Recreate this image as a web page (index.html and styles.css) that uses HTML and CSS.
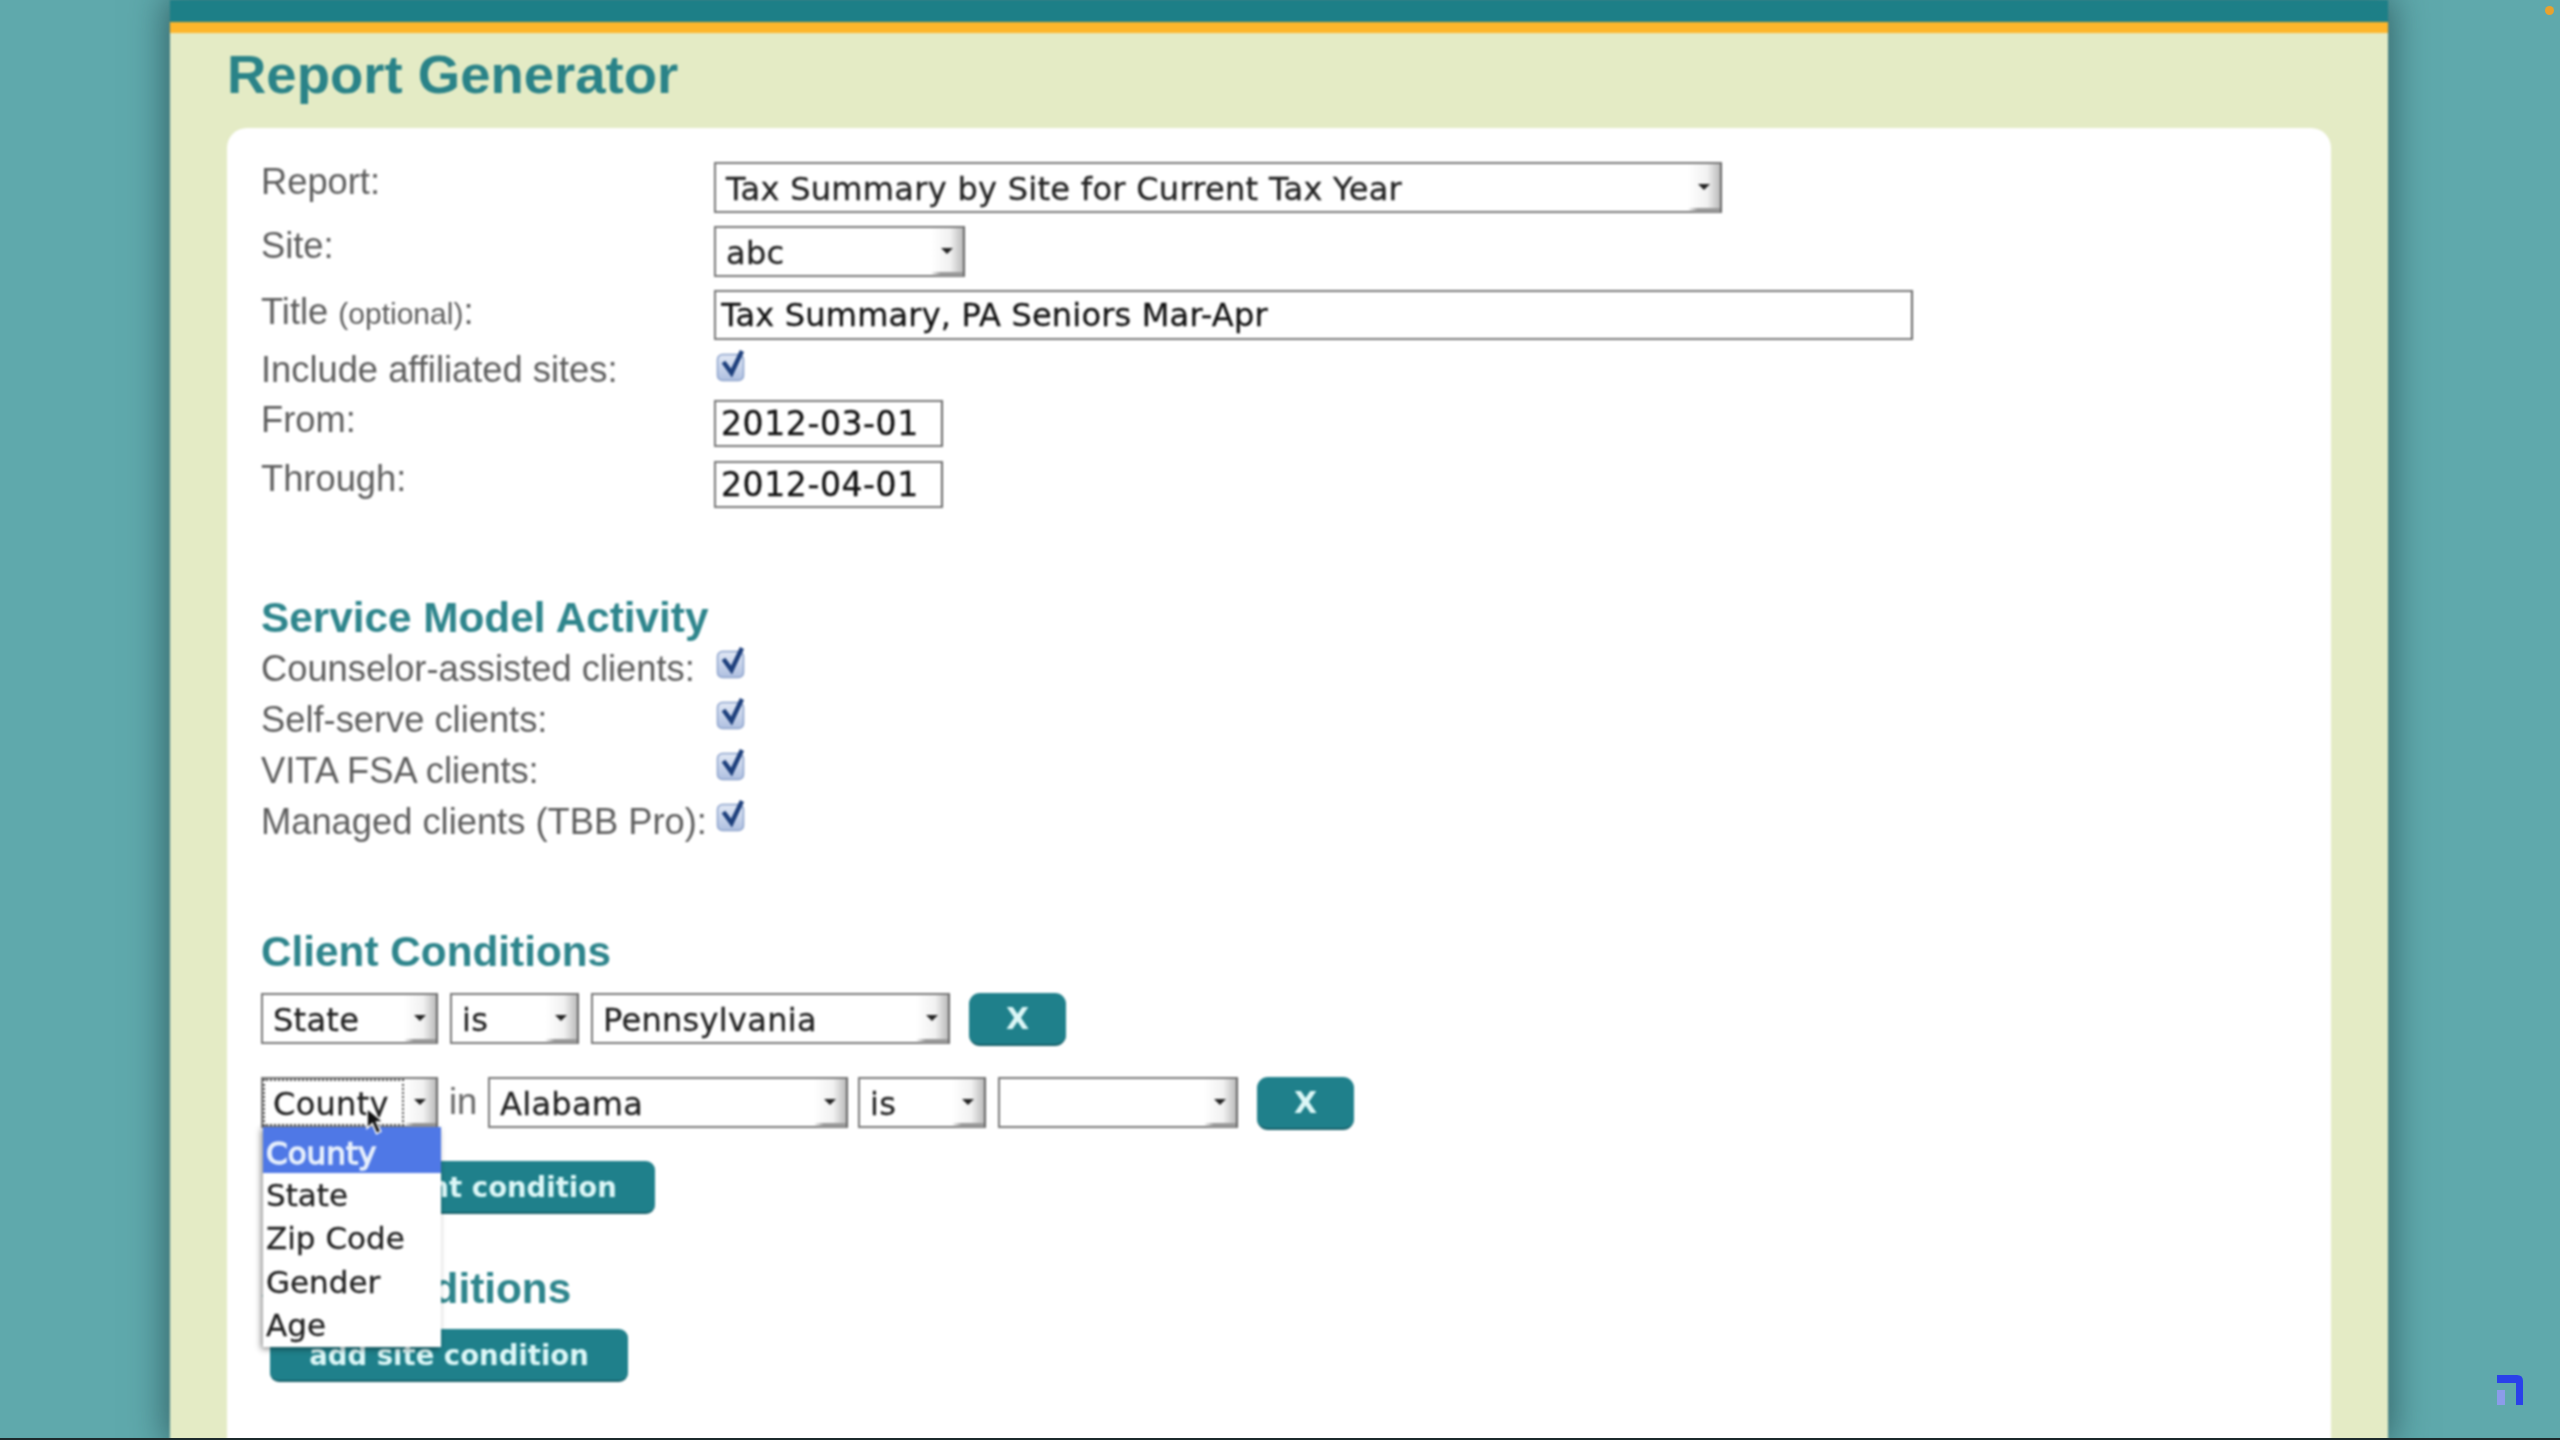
FILE: index.html
```html
<!DOCTYPE html>
<html lang="en">
<head>
<meta charset="utf-8">
<title>Report Generator</title>
<link rel="stylesheet" href="styles.css">
</head>
<body>
<svg class="defs" width="0" height="0" aria-hidden="true">
  <defs>
    <linearGradient id="cbfill" x1="0" y1="0" x2="0" y2="1">
      <stop offset="0" stop-color="#e2e9f6"/>
      <stop offset="1" stop-color="#aebfe0"/>
    </linearGradient>
    <symbol id="check" viewBox="0 0 30 34">
      <rect x="1.5" y="6.5" width="26" height="26" rx="5" fill="url(#cbfill)" stroke="#8ca2cc" stroke-width="1.5"/>
      <path d="M7.500 14 L15.500 25 L26 3" fill="none" stroke="#1d3f7c" stroke-width="4.500"/>
    </symbol>
  </defs>
</svg>
<div class="page">
  <div class="topbar"></div>
  <main class="panel">
    <h1 class="title">Report Generator</h1>
    <div class="card">
      <div class="row r64">
        <label class="lbl">Report:</label>
        <div class="sel w-report"><span class="val">Tax Summary by Site for Current Tax Year</span><span class="arr"></span></div>
      </div>
      <div class="row r64">
        <label class="lbl">Site:</label>
        <div class="sel w-site"><span class="val">abc</span><span class="arr"></span></div>
      </div>
      <div class="row r60">
        <label class="lbl lbl-down">Title <small>(optional)</small>:</label>
        <input class="txt w-title" type="text" value="Tax Summary, PA Seniors Mar-Apr">
      </div>
      <div class="row r50">
        <label class="lbl">Include affiliated sites:</label>
        <svg class="cb cb-include" viewBox="0 0 30 34"><use href="#check"/></svg>
      </div>
      <div class="row r61">
        <label class="lbl">From:</label>
        <input class="txt w-date" type="text" value="2012-03-01">
      </div>
      <div class="row r61">
        <label class="lbl lbl-up">Through:</label>
        <input class="txt w-date" type="text" value="2012-04-01">
      </div>

      <h2 class="sec sec-service">Service Model Activity</h2>
      <div class="row r51"><label class="lbl">Counselor-assisted clients:</label><svg class="cb" viewBox="0 0 30 34"><use href="#check"/></svg></div>
      <div class="row r51"><label class="lbl">Self-serve clients:</label><svg class="cb" viewBox="0 0 30 34"><use href="#check"/></svg></div>
      <div class="row r51"><label class="lbl">VITA FSA clients:</label><svg class="cb" viewBox="0 0 30 34"><use href="#check"/></svg></div>
      <div class="row r51"><label class="lbl">Managed clients (TBB Pro):</label><svg class="cb" viewBox="0 0 30 34"><use href="#check"/></svg></div>

      <h2 class="sec sec-client">Client Conditions</h2>
      <div class="cond">
        <div class="sel w-field"><span class="val">State</span><span class="arr"></span></div>
        <div class="sel w-is gap-12"><span class="val">is</span><span class="arr"></span></div>
        <div class="sel w-penn gap-12"><span class="val">Pennsylvania</span><span class="arr"></span></div>
        <button class="btn btn-x gap-19" type="button">X</button>
      </div>
      <div class="cond cond-second">
        <div class="field-wrap">
          <div class="sel w-field focused"><span class="val">County</span><span class="arr"></span></div>
          <ul class="menu">
            <li class="on">County</li>
            <li>State</li>
            <li>Zip Code</li>
            <li>Gender</li>
            <li>Age</li>
          </ul>
          <svg class="cursor" viewBox="0 0 18 28"><path d="M1 1 L1 20 L6 15.500 L10 25 L14 23 L10 14 L16.500 14 Z" fill="#111" stroke="#fff" stroke-width="1.500"/></svg>
        </div>
        <span class="in">in</span>
        <div class="sel w-state"><span class="val">Alabama</span><span class="arr"></span></div>
        <div class="sel w-is2 gap-10"><span class="val">is</span><span class="arr"></span></div>
        <div class="sel w-blank gap-12"><span class="val"></span><span class="arr"></span></div>
        <button class="btn btn-x gap-19" type="button">X</button>
      </div>
      <button class="btn btn-add add-client" type="button">add client condition</button>
      <h2 class="sec sec-site">Site Conditions</h2>
      <button class="btn btn-add add-site" type="button">add site condition</button>
    </div>
  </main>
</div>
<span class="dot"></span>
<svg class="mark" viewBox="0 0 26 30">
  <rect x="0" y="15" width="8" height="15" fill="#8b9cea"/>
  <path d="M0 0 H20 Q26 0 26 6 V30 H19 V8 H0 Z" fill="#2a41ea"/>
</svg>
</body>
</html>
```

FILE: styles.css
```css
html, body {
  margin: 0;
  height: 1440px;
  overflow: hidden;
  background: #5fa9ac;
}
body {
  position: relative;
  font-family: "Liberation Sans", Arial, sans-serif;
}
body::after {
  content: "";
  position: absolute;
  inset: 0;
  border-bottom: 2px solid #1c2a2c;
  pointer-events: none;
}
.defs { position: absolute; }

.page {
  width: 2218px;
  height: 1440px;
  margin-left: 170px;
  box-shadow: 0 0 34px 4px rgba(20, 50, 55, .6);
  display: flex;
  flex-direction: column;
  filter: blur(1px);
}
.topbar {
  height: 22px;
  flex: none;
  background: #1d7f87;
  border-bottom: 11px solid #fdb62c;
}
.panel {
  flex: 1;
  background: #e4ebc5;
  padding: 0 57px;
  display: flex;
  flex-direction: column;
  min-height: 0;
}
.title {
  margin: 0;
  height: 95px;
  line-height: 84px;
  font-size: 54.500px;
  font-weight: 700;
  color: #2a8388;
}
.card {
  flex: 1;
  background: #fff;
  border-radius: 20px 20px 0 0;
  padding: 34px 34px 0;
  min-height: 0;
}

.row { display: flex; align-items: flex-start; }
.r64 { height: 64px; }
.r60 { height: 60px; }
.r50 { height: 50px; }
.r61 { height: 61px; }
.r51 { height: 51px; }

.lbl {
  flex: none;
  width: 453px;
  font-size: 36.300px;
  line-height: 40px;
  color: #5e5e5e;
  white-space: nowrap;
}
.lbl small { font-size: 30px; }
.lbl-down { margin-top: 2px; }
.lbl-up { margin-top: -2px; }

.sel, .txt {
  box-sizing: border-box;
  height: 51px;
  flex: none;
  border: 2px solid #777;
  border-right-color: #666;
  background: #fff;
  font-family: "DejaVu Sans", Verdana, sans-serif;
  font-size: 32px;
  color: #222;
  -webkit-text-stroke: .3px currentColor;
}
.sel { display: flex; align-items: stretch; }
.val {
  flex: 1;
  min-width: 0;
  padding-left: 10px;
  line-height: 50px;
  letter-spacing: .3px;
  white-space: nowrap;
  overflow: hidden;
}
.arr {
  flex: none;
  width: 32px;
  position: relative;
  background: linear-gradient(90deg, #fff 0%, #f1f1f1 60%, #bbb 100%);
}
.arr::before {
  content: "";
  position: absolute;
  left: 10px;
  top: 20px;
  border: 6px solid transparent;
  border-top: 6px solid #222;
  border-bottom: 0;
}
.arr::after {
  content: "";
  position: absolute;
  left: 0;
  right: 0;
  bottom: -1px;
  height: 4px;
  background: linear-gradient(90deg, transparent, #999 30%);
}
.txt {
  padding: 0 0 0 5px;
  outline: none;
  border-radius: 0;
}
.w-report { width: 1008px; }
.w-site { width: 251px; }
.w-title { width: 1199px; height: 50px; color: #111; letter-spacing: .2px; }
.w-date { width: 229px; height: 47px; padding-left: 5px; color: #111; font-size: 33px; letter-spacing: .6px; }
.w-field { width: 177px; }
.w-is { width: 129px; }
.w-penn { width: 359px; }
.w-state { width: 360px; }
.w-is2 { width: 128px; }
.w-blank { width: 240px; }
.gap-10 { margin-left: 10px; }
.gap-12 { margin-left: 12px; }
.gap-19 { margin-left: 19px; }

.focused .val {
  outline: 2px dotted #444;
  outline-offset: -2px;
}

.cb {
  flex: none;
  width: 30px;
  height: 34px;
  margin: -4.500px 0 0 2px;
}
.cb-include { margin-top: -2px; }

.sec {
  margin: 0;
  font-size: 42.300px;
  line-height: 50px;
  font-weight: 700;
  color: #2e858c;
}
.sec-service { margin-top: 71px; margin-bottom: 6px; }
.sec-client { margin-top: 74px; margin-bottom: 16px; }
.sec-site { margin-top: 50px; margin-bottom: 15px; }

.cond { display: flex; align-items: flex-start; height: 84px; }
.field-wrap { position: relative; flex: none; height: 51px; }
.in {
  flex: none;
  width: 50px;
  padding-left: 11px;
  box-sizing: border-box;
  font-size: 36.300px;
  line-height: 50px;
  color: #666;
}

.btn {
  border: 0;
  border-bottom: 2px solid #17606a;
  background: #1f808b;
  color: #dcf7f7;
  font-family: "DejaVu Sans", Verdana, sans-serif;
  font-weight: 700;
  padding: 0;
  display: block;
}
.btn-x {
  flex: none;
  width: 97px;
  height: 53px;
  border-radius: 11px;
  font-size: 30px;
}
.btn-add {
  height: 53px;
  border-radius: 9px;
  font-size: 27.500px;
  margin-left: 9px;
}
.add-client { width: 385px; }
.add-site { width: 358px; }

.menu {
  position: absolute;
  z-index: 5;
  left: 2px;
  top: 50px;
  width: 178px;
  margin: 0;
  padding: 0;
  list-style: none;
  background: #fff;
  box-shadow: -2px 2px 6px rgba(0, 0, 0, .45);
  font-family: "DejaVu Sans", Verdana, sans-serif;
  font-size: 31px;
  color: #222;
  -webkit-text-stroke: .3px currentColor;
}
.menu li {
  height: 43.500px;
  line-height: 45px;
  padding-left: 3px;
}
.menu .on {
  height: 45.500px;
  line-height: 52px;
  background: #4f78e6;
  color: #e6effc;
  -webkit-text-stroke: 1.400px #e6effc;
}
.cursor {
  position: absolute;
  z-index: 6;
  left: 105px;
  top: 30px;
  width: 19px;
  height: 30px;
}

.dot {
  position: absolute;
  left: 2545px;
  top: 6px;
  width: 9px;
  height: 9px;
  border-radius: 50%;
  background: #e8a22f;
}
.mark {
  position: absolute;
  left: 2497px;
  top: 1375px;
  width: 26px;
  height: 30px;
}
```
